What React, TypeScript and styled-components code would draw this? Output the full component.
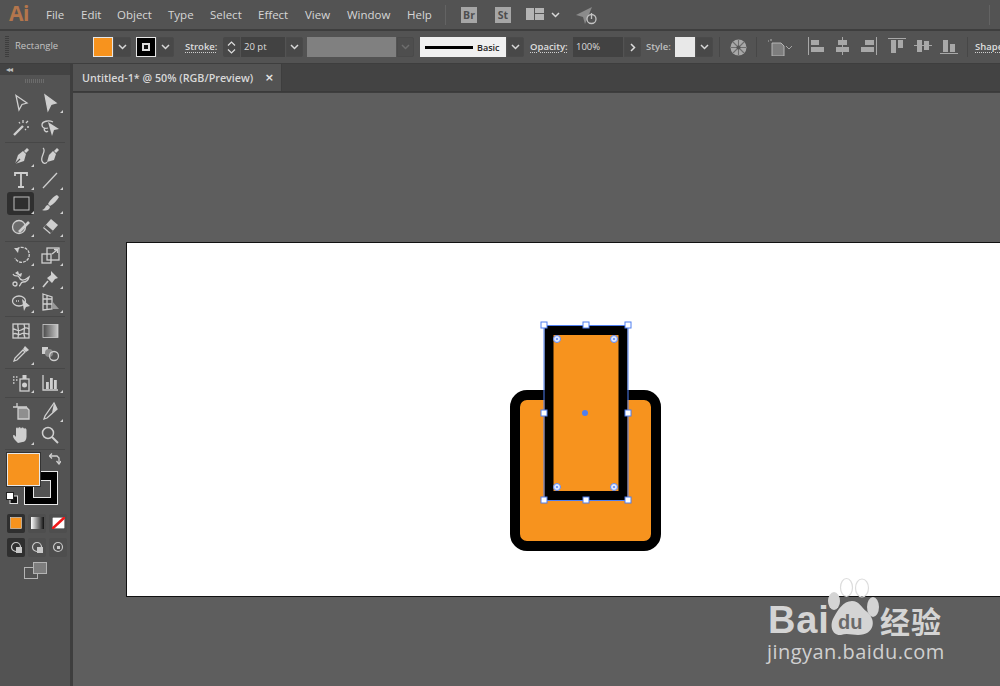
import React from "react";
import styled, { createGlobalStyle } from "styled-components";

const Global = createGlobalStyle`
  html, body { margin: 0; padding: 0; background: #5e5e5e; }
  #root { width: 1000px; height: 686px; overflow: hidden; }
  * { box-sizing: border-box; }
`;

const Shell = styled.div`
  width: 1000px; height: 686px; display: flex; flex-direction: column; overflow: hidden;
  background: #3e3e3e; font-family: "Open Sans", "Noto Sans", sans-serif; color: #d2d2d2;
`;

/* ---------- menu ---------- */
const MenuBar = styled.div`
  height: 29px; flex: none; background: #535353; display: flex; align-items: center; position: relative;
`;
const AiLogo = styled.div`
  width: 46px; padding-left: 9px; font: 700 21px "Open Sans", sans-serif; color: #b4764c; letter-spacing: -0.5px; line-height: 29px; margin-top: -2px;
`;
const MenuItem = styled.div<{ $w: number }>`
  width: ${p => p.$w}px; font-size: 11.5px; color: #d6d6d6; line-height: 29px;
`;
const VSep = styled.div<{ $m?: string; $c?: string }>`
  width: 1px; height: 20px; flex: none; background: ${p => p.$c ?? "#636363"}; margin: ${p => p.$m ?? "0"};
`;
const AppBadge = styled.div<{ $m: string }>`
  width: 16px; height: 16px; flex: none; background: #a6a6a6; color: #4e4e4e; font: 700 10.5px "Open Sans", sans-serif;
  display: flex; align-items: center; justify-content: center; margin: ${p => p.$m};
`;
const Glyph = styled.svg<{ $m?: string }>`
  display: block; flex: none; margin: ${p => p.$m ?? "0"};
`;

/* ---------- control bar ---------- */
const ControlBar = styled.div`
  height: 32px; flex: none; margin-top: 2px; background: #535353; display: flex; align-items: center; position: relative;
`;
const Grip = styled.div`
  width: 4px; height: 22px; margin-left: 5px; flex: none;
  background: repeating-linear-gradient(to bottom, #3d3d3d 0 1px, transparent 1px 2px);
`;
const ToolName = styled.div`
  width: 78px; margin: -3px 0 0 6px; font-size: 9.5px; color: #c4c4c4; flex: none;
`;
const Swatch = styled.div<{ $c: string; $w?: number; $b?: string }>`
  width: ${p => p.$w ?? 20}px; height: 20px; flex: none; background: ${p => p.$c}; border: 1px solid ${p => p.$b ?? "#e6e6e6"};
  display: flex; align-items: center; justify-content: center; position: relative;
`;
const Chev = styled.div<{ $w?: number; $bg?: string }>`
  width: ${p => p.$w ?? 17}px; height: 20px; flex: none; background: ${p => p.$bg ?? "#484848"}; border-radius: 0 2px 2px 0;
  display: flex; align-items: center; justify-content: center; border: 1px solid #4a4a4a; margin-left: 1px;
`;
const Spin = styled.div`
  width: 17px; height: 20px; flex: none; background: #484848; display: flex; flex-direction: column; align-items: center; justify-content: center; gap: 3px; border-radius: 2px 0 0 2px;
`;
const Input = styled.div<{ $w: number }>`
  width: ${p => p.$w}px; height: 20px; flex: none; background: #424242; color: #dcdcdc; font-size: 9.5px; line-height: 19px; padding-left: 3px; margin-left: 1px;
`;
const FieldLabel = styled.div<{ $m: string; $dot?: boolean; $w: number }>`
  width: ${p => p.$w}px; flex: none; margin: ${p => p.$m}; font-size: 9.5px; font-weight: 600; color: ${p => (p.$dot ? "#dedede" : "#c0c0c0")}; line-height: 12px;
  white-space: nowrap;
  ${p => (p.$dot ? "text-decoration: underline dotted #cfcfcf; text-underline-offset: 2px;" : "")}
`;
const Profile = styled.div`
  width: 86px; height: 20px; flex: none; margin-left: 6px; background: #f0f0f0; display: flex; align-items: center; padding-left: 5px; gap: 4px;
  font-size: 9px; font-weight: 600; color: #222;
`;
const StrokeLine = styled.div`
  width: 48px; height: 3px; background: #000; flex: none;
`;
const Gap = styled.div<{ $w: number }>`
  width: ${p => p.$w}px; flex: none;
`;

/* ---------- workspace ---------- */
const Workspace = styled.div`
  flex: 1; min-height: 0; margin-top: 1px; display: flex;
`;
const Panel = styled.div`
  width: 70px; flex: none; display: flex; flex-direction: column; background: #535353;
`;
const PanelHead = styled.div`
  height: 11px; flex: none; background: #434343; font-size: 8px; color: #bdbdbd; padding-left: 6px; line-height: 10px; letter-spacing: -1px;
`;
const PanelGrip = styled.div`
  height: 16px; flex: none; display: flex; justify-content: center; padding-top: 4px;
  &::before { content: ""; width: 20px; height: 4px; background: repeating-linear-gradient(to right, #6c6c6c 0 1px, transparent 1px 2px); }
`;
const Group = styled.div<{ $gap?: number }>`
  padding: 0 6px 2px 7px; display: grid; grid-template-columns: 29px 29px; grid-auto-rows: 23.5px; row-gap: ${p => p.$gap ?? 0}px; position: relative;
`;
const Rule = styled.div`
  height: 1px; margin: 0 5px 2px; background: #474747; flex: none;
`;
const Tool = styled.div<{ $on?: boolean; $corner?: boolean }>`
  width: 27px; height: 23px; position: relative; display: flex; align-items: center; justify-content: center; border-radius: 3px;
  background: ${p => (p.$on ? "#2f2f2f" : "transparent")};
  ${p => p.$corner ? `&::after { content: ""; position: absolute; right: 0; bottom: 1px; border-style: solid; border-width: 0 0 3px 3px; border-color: transparent transparent #d0d0d0 transparent; }` : ""}
`;
const Well = styled.div`
  height: 61px; margin-top: 1px; position: relative; flex: none;
`;
const FillWell = styled.div`
  position: absolute; left: 7px; top: 0; width: 33px; height: 33px; background: #f7931e; border: 1px solid #e8e8e8; outline: 1px solid #333; z-index: 2;
`;
const StrokeWell = styled.div`
  position: absolute; left: 24px; top: 18px; width: 34px; height: 34px; background: #000; border: 1px solid #e8e8e8; z-index: 1;
  &::after { content: ""; position: absolute; left: 8px; top: 8px; width: 16px; height: 16px; background: #535353; border: 1px solid #e8e8e8; }
`;
const SwapIcon = styled.div`
  position: absolute; left: 49px; top: 0;
`;
const DefaultIcon = styled.div`
  position: absolute; left: 6px; top: 39px; z-index: 3;
`;
const ModeRow = styled.div<{ $h: number }>`
  height: ${p => p.$h}px; margin-bottom: 5px; padding-left: 7px; display: flex; gap: 3px; flex: none;
`;
const ModeBtn = styled.div<{ $on?: boolean; $w?: number }>`
  width: ${p => p.$w ?? 18}px; height: 100%; display: flex; align-items: center; justify-content: center; border-radius: 2px;
  background: ${p => (p.$on ? "#2f2f2f" : "#4e4e4e")};
`;
const ScreenRow = styled.div`
  display: flex; justify-content: center; padding-left: 1px;
`;
const Gutter = styled.div`
  width: 3px; flex: none; background: #3e3e3e;
`;
const Main = styled.div`
  flex: 1; min-width: 0; display: flex; flex-direction: column;
`;
const TabBar = styled.div`
  height: 28px; flex: none; background: #434343; display: flex; border-bottom: 1px solid #3a3a3a;
`;
const Tab = styled.div`
  width: 209px; background: #535353; display: flex; align-items: center; justify-content: space-between; padding: 0 7px 0 9px;
  font-size: 10.75px; font-weight: 600; color: #d8d8d8; border-right: 1px solid #3e3e3e;
`;
const Close = styled.span`
  font: 700 11px "DejaVu Sans", sans-serif; color: #e4e4e4;
`;
const Canvas = styled.div`
  flex: 1; margin-top: 1px; background: #5e5e5e; position: relative; overflow: hidden;
`;
const Artboard = styled.div`
  position: absolute; left: 53px; top: 149px; width: 960px; height: 355px; background: #fff; border: 1px solid #111;
`;
const ArtSvg = styled.svg`
  position: absolute; left: 0; top: 0; overflow: visible;
`;
const Mark = styled.div`
  position: absolute; left: 694px; top: 484px; width: 190px; height: 96px; color: #d4d4d4;
`;
const MarkBrand = styled.div`
  position: absolute; left: 1px; top: 23px; font: 700 38px/40px "Liberation Sans", sans-serif; letter-spacing: 0.8px;
`;
const MarkPaw = styled.svg`
  position: absolute; left: 0; top: 0; overflow: visible;
`;
const MarkDu = styled.text`
  font: 700 20px "Liberation Sans", sans-serif; fill: #6a6a6a;
`;
const MarkCn = styled.div`
  position: absolute; left: 113px; top: 22px; font: 700 30px/42px "Noto Sans CJK SC", sans-serif; letter-spacing: 1px; white-space: nowrap;
`;
const MarkUrl = styled.div`
  position: absolute; left: 0; top: 62px; font: 400 20px/26px "Open Sans", sans-serif; letter-spacing: 0.45px; white-space: nowrap; color: #d0d0d0;
`;

/* ---------- icons ---------- */
const ChevD = ({ c = "#d8d8d8" }: { c?: string }) => (
  <Glyph width="9" height="6" viewBox="0 0 9 6"><path d="M1 1l3.5 3.5L8 1" fill="none" stroke={c} strokeWidth="1.5" /></Glyph>
);
const I = ({ children }: { children: React.ReactNode }) => (
  <Glyph width="20" height="20" viewBox="0 0 20 20" fill="none" stroke="#cfcfcf" strokeWidth="1.3">{children}</Glyph>
);
const F = "#cfcfcf";

const icons: Record<string, React.ReactNode> = {
  select: <path d="M5 2.5l11 7.5-5 1.5-3 5.5z" />,
  direct: <path d="M5 2l11 8-5 1.5-3 6z" fill={F} />,
  wand: <><path d="M3 17L12 8" strokeWidth="2.4" /><path d="M12 2v3M15 5l2-2M16 9h2M8 4l1 1.5M14 11l1 1" /></>,
  lasso: <><path d="M13 4C9 2 2 3 2 7c0 3 3 4 6 3" /><path d="M5 10c-2 2 1 5 3 3" /><path d="M8 4l11 7-5 1-2 6z" fill={F} stroke="none" /></>,
  pen: <><path d="M16 2l2 2-3 3-2-2z" fill={F} stroke="none" /><path d="M12 5l3 3-2 7-9 3 3-9z" fill={F} stroke="none" /><path d="M4 18l5-5" stroke="#535353" /></>,
  curv: <><path d="M17 2l2 2-3 3-2-2z" fill={F} stroke="none" /><path d="M13 5l3 3-2 6-7 2 2-7z" fill={F} stroke="none" /><path d="M3 2c4 3-3 8-1 13 1 3 4 3 5 1" /></>,
  type: <path d="M4 6V3h12v3M10 3v14M7 17h6" strokeWidth="1.8" />,
  line: <path d="M3 18L17 3" />,
  rect: <rect x="3" y="4" width="15" height="13" strokeWidth="1" stroke="#bdbdbd" />,
  brush: <><path d="M18 2c-3 1-7 5-9 9l2 2c4-2 7-6 9-9z" fill={F} stroke="none" transform="translate(-1 0)" /><path d="M8 12c-3 0-2 4-6 5 3 1 7 1 8-3z" fill={F} stroke="none" /></>,
  shaper: <><circle cx="8" cy="10" r="6.500" fill="#6c6c6c" /><path d="M8 15L18 5" strokeWidth="2.6" /></>,
  eraser: <><path d="M11 2l7 6-8 9-7-6z" fill={F} stroke="none" /><path d="M3 11l7 6" stroke="#535353" strokeWidth="3" transform="translate(2 -2)" /></>,
  rotate: <><path d="M6 4a7.5 7.5 0 1 1-2 9" strokeDasharray="3 1" /><path d="M3 3l5 0-1 5z" fill={F} stroke="none" /></>,
  scale: <><rect x="2" y="9" width="9" height="9" /><rect x="7" y="3" width="12" height="12" /><path d="M12 9l5-4M14 4.500h3.500V8" /></>,
  warp: <><path d="M2 5c2 4 5 0 6 3s4 5 10 0c-1 4-3 5-6 5s-2 4-4 4" /><circle cx="4" cy="15" r="2" /><path d="M4 4l3-2 1 3 3-1-1 4" fill={F} stroke="none" /></>,
  pin: <><path d="M11 2l7 7-3 1-3 4-5-5 4-3z" fill={F} stroke="none" /><path d="M3 18l5-6" strokeWidth="1.6" /></>,
  shapeb: <><ellipse cx="8" cy="9" rx="6.500" ry="5" /><path d="M11 7l8 7-4 1-2 4z" fill={F} stroke="none" /><path d="M5 9h3" strokeDasharray="1 1" /></>,
  persp: <><path d="M3 2l9 3v12l-9 1zM3 7h9M3 12h9M7 3v14" /><path d="M12 9l7 8h-7z" fill="#9a9a9a" stroke="none" /></>,
  mesh: <><rect x="2" y="3" width="16" height="14" /><path d="M2 8c4 0 4 3 8 1s5-3 8-1M2 13c4-2 5 2 8 0s5 0 8 0M7 3c-1 4 2 6 0 14M13 3c2 5-2 8 1 14" /></>,
  gradient: <rect x="3" y="3.500" width="15" height="13" fill="url(#toolGrad)" stroke="#cfcfcf" strokeWidth="0.8" />,
  eyedrop: <><path d="M14 2l4 4-3 2-3-3z" fill={F} stroke="none" /><path d="M12 6l2 2-8 8-3 1 1-3z" /></>,
  blend: <><rect x="2" y="3" width="6" height="7" fill={F} stroke="none" /><circle cx="9" cy="9" r="4" fill="#8a8a8a" stroke="none" /><circle cx="14" cy="12" r="4.500" /></>,
  spray: <><rect x="9" y="6" width="9" height="12" /><rect x="11.500" y="2" width="4" height="4" fill={F} stroke="none" /><circle cx="13.500" cy="12" r="2.500" fill={F} stroke="none" /><path d="M2 4h1.500M5 4h1.500M2 7h1.500M5 7h1.500M2 10h1.500" /></>,
  chart: <><path d="M3 2v15h15" /><rect x="6" y="9" width="2.800" height="7" fill={F} stroke="none" /><rect x="10" y="5" width="2.800" height="11" fill={F} stroke="none" /><rect x="14" y="7" width="2.800" height="9" fill={F} stroke="none" /></>,
  artb: <><path d="M2 6h14M6 2v4" /><path d="M7 7h9l2 2v9H7z" fill="#8f8f8f" /></>,
  slice: <><path d="M14 2l3 6-10 9-3 1 1-3z" /><path d="M14 2l3 6-5 4z" fill={F} stroke="none" /></>,
  hand: <path d="M7 18c-3-3-5-5-5-7s2-1 3 1V4c0-2 2-2 2 0 0-2.500 3-2.500 3 0 0-2 3-2 3 0 0-1 2.500-1 2.500 1v7c0 3-2 5-4 5z" fill={F} stroke="none" />,
  zoom: <><circle cx="8" cy="8" r="5.500" strokeWidth="1.500" /><path d="M12 12l6 6" strokeWidth="2" /></>,
};

type T = [string, boolean?, boolean?];
const Row = ({ items, gap }: { items: T[]; gap?: number }) => (
  <Group $gap={gap}>
    {items.map(([n, corner, on]) => (
      <Tool key={n} $corner={corner} $on={on}><I>{icons[n]}</I></Tool>
    ))}
  </Group>
);

const AlignIcon = ({ d, m }: { d: React.ReactNode; m: string }) => (
  <Glyph $m={m} width="18" height="20" viewBox="0 0 18 20" fill="#a8a8a8">{d}</Glyph>
);
const Handle = ({ x, y }: { x: number; y: number }) => (
  <rect x={x - 3} y={y - 3} width="6" height="6" fill="#fff" stroke="#4f7ff0" strokeWidth="1" />
);
const Widget = ({ x, y }: { x: number; y: number }) => (
  <g><circle cx={x} cy={y} r="3.500" fill="#dfe7ff" stroke="#5f8af5" strokeWidth="1" /><circle cx={x} cy={y} r="1.100" fill="#5f8af5" /></g>
);

const menus: [string, number][] = [["File", 35], ["Edit", 36], ["Object", 51], ["Type", 42], ["Select", 48], ["Effect", 47], ["View", 42], ["Window", 60], ["Help", 38]];

export default function App() {
  const ox = 127, oy = 243;
  return (
    <Shell>
      <Global />
      <MenuBar>
        <AiLogo>Ai</AiLogo>
        {menus.map(([m, w]) => <MenuItem key={m} $w={w}>{m}</MenuItem>)}
        <VSep />
        <AppBadge $m="0 0 0 15px">Br</AppBadge>
        <AppBadge $m="0 0 0 18px">St</AppBadge>
        <Glyph $m="0 0 0 15px" width="18" height="13" viewBox="0 0 18 13" fill="#b4b4b4"><rect width="8" height="12" /><rect x="9" width="9" height="5" /><rect x="9" y="6" width="9" height="6" /></Glyph>
        <Gap $w={7} /><ChevD />
        <Glyph $m="2px 0 0 16px" width="23" height="20" viewBox="0 0 23 20" fill="none">
          <path d="M0 9L16 1 9 18 7 11z" fill="#8b8b8b" />
          <circle cx="15.500" cy="13" r="4.500" stroke="#c4c4c4" strokeWidth="1.300" fill="#535353" />
          <path d="M15.500 7v6" stroke="#c4c4c4" strokeWidth="1.300" />
        </Glyph>
        <Gap $w={390} /><VSep />
      </MenuBar>

      <ControlBar>
        <Grip />
        <ToolName>Rectangle</ToolName>
        <Swatch $c="#f7931e" />
        <Chev><ChevD /></Chev>
        <Gap $w={5} />
        <Swatch $c="#000">
          <Glyph width="8" height="8" viewBox="0 0 8 8"><rect width="8" height="8" fill="#ddd" /><rect x="2" y="2" width="4" height="4" fill="#111" /></Glyph>
        </Swatch>
        <Chev><ChevD /></Chev>
        <FieldLabel $w={32} $m="0 0 0 11px" $dot>Stroke:</FieldLabel>
        <Gap $w={6} />
        <Spin>
          <Glyph width="9" height="5" viewBox="0 0 9 5"><path d="M1 4.500L4.500 1 8 4.500" fill="none" stroke="#ddd" strokeWidth="1.200" /></Glyph>
          <Glyph width="9" height="5" viewBox="0 0 9 5"><path d="M1 .5L4.500 4 8 .5" fill="none" stroke="#ddd" strokeWidth="1.200" /></Glyph>
        </Spin>
        <Input $w={44}>20 pt</Input>
        <Chev><ChevD /></Chev>
        <Gap $w={4} />
        <Swatch $c="#808080" $w={89} $b="#808080" />
        <Chev $bg="#4e4e4e"><ChevD c="#6d6d6d" /></Chev>
        <Profile><StrokeLine />Basic</Profile>
        <Chev><ChevD /></Chev>
        <FieldLabel $w={37} $m="0 0 0 6px" $dot>Opacity:</FieldLabel>
        <Gap $w={5} />
        <Input $w={50}>100%</Input>
        <Chev>
          <Glyph width="6" height="9" viewBox="0 0 6 9"><path d="M1 1l3.500 3.500L1 8" fill="none" stroke="#ddd" strokeWidth="1.500" /></Glyph>
        </Chev>
        <FieldLabel $w={26} $m="0 0 0 5px">Style:</FieldLabel>
        <Gap $w={3} />
        <Swatch $c="#e8e8e8" $b="#e8e8e8" />
        <Chev><ChevD /></Chev>
        <VSep $m="0 0 0 6px" $c="#474747" />
        <Glyph $m="0 0 0 10px" width="17" height="17" viewBox="0 0 17 17">
          <circle cx="8.500" cy="8.500" r="8" fill="#a8a8a8" />
          <g stroke="#6d6d6d" strokeWidth="1.100"><path d="M8.500 1v15M1 8.500h15M3 3l11 11M14 3L3 14" /></g>
          <circle cx="8.500" cy="8.500" r="2" fill="#555" />
        </Glyph>
        <VSep $m="0 0 0 9px" $c="#474747" />
        <Glyph $m="0 0 0 11px" width="25" height="17" viewBox="0 0 25 17" fill="none">
          <path d="M4 4h9l3 3v10H4z" fill="#7e7e7e" stroke="#b5b5b5" />
          <path d="M0 2h1M3 0v2" stroke="#b5b5b5" />
          <path d="M18 7l3 3 3-3" stroke="#a5a5a5" />
        </Glyph>
        <AlignIcon m="0 0 0 15px" d={<><rect width="1" height="18" /><rect x="3" y="3" width="8" height="5" /><rect x="3" y="10" width="13" height="5" /></>} />
        <AlignIcon m="0 0 0 8px" d={<><rect x="8" width="1" height="18" /><rect x="4" y="3" width="9" height="5" /><rect x="2" y="10" width="13" height="5" /></>} />
        <AlignIcon m="0 0 0 8px" d={<><rect x="16" width="1" height="18" /><rect x="5" y="3" width="9" height="5" /><rect x="1" y="10" width="13" height="5" /></>} />
        <AlignIcon m="0 0 0 10px" d={<><rect width="18" height="1" y="1" /><rect x="3" y="3" width="5" height="13" /><rect x="10" y="3" width="5" height="8" /></>} />
        <AlignIcon m="0 0 0 8px" d={<><rect width="18" height="1" y="8" /><rect x="3" y="3" width="5" height="12" /><rect x="10" y="4" width="5" height="9" /></>} />
        <AlignIcon m="0 0 0 8px" d={<><rect width="18" height="1" y="16" /><rect x="3" y="3" width="5" height="12" /><rect x="10" y="7" width="5" height="8" /></>} />
        <VSep $m="0 0 0 9px" $c="#474747" />
        <FieldLabel $w={40} $m="0 0 0 7px" $dot>Shape:</FieldLabel>
      </ControlBar>

      <Workspace>
        <Panel>
          <PanelHead>◂◂</PanelHead>
          <PanelGrip />
          <svg width="0" height="0" style={{ position: "absolute" }}>
            <defs><linearGradient id="toolGrad"><stop offset="0" stopColor="#4a4a4a" /><stop offset="1" stopColor="#c8c8c8" /></linearGradient></defs>
          </svg>
          <Row gap={1.5} items={[["select"], ["direct", true], ["wand"], ["lasso"]]} />
          <Rule />
          <Row items={[["pen", true], ["curv"], ["type", true], ["line", true], ["rect", true, true], ["brush", true], ["shaper", true], ["eraser", true]]} />
          <Rule />
          <Row items={[["rotate", true], ["scale", true], ["warp", true], ["pin", true], ["shapeb", true], ["persp", true]]} />
          <Rule />
          <Row items={[["mesh"], ["gradient"], ["eyedrop", true], ["blend"]]} />
          <Rule />
          <Row items={[["spray", true], ["chart", true]]} />
          <Rule />
          <Row items={[["artb"], ["slice", true], ["hand", true], ["zoom"]]} />
          <Rule />
          <Well>
            <FillWell />
            <StrokeWell />
            <SwapIcon>
              <Glyph width="12" height="12" viewBox="0 0 12 12" fill="none" stroke="#cfcfcf" strokeWidth="1.300">
                <path d="M1 3h7l2 2v5" /><path d="M3 .5L.5 3 3 5.500M7.500 8l2.500 3 2-3" />
              </Glyph>
            </SwapIcon>
            <DefaultIcon>
              <Glyph width="12" height="12" viewBox="0 0 12 12">
                <rect x="4" y="4" width="7.500" height="7.500" fill="#111" stroke="#ddd" />
                <rect x=".5" y=".5" width="7" height="7" fill="#fff" stroke="#222" />
              </Glyph>
            </DefaultIcon>
          </Well>
          <ModeRow $h={19}>
            <ModeBtn $on>
              <Glyph width="12" height="12" viewBox="0 0 12 12"><rect x=".5" y=".5" width="11" height="11" fill="#f7931e" stroke="#ddd" strokeWidth=".6" /></Glyph>
            </ModeBtn>
            <ModeBtn>
              <Glyph width="13" height="12" viewBox="0 0 13 12">
                <defs><linearGradient id="mg"><stop offset="0" stopColor="#fff" /><stop offset="1" stopColor="#111" /></linearGradient></defs>
                <rect width="13" height="12" fill="url(#mg)" />
              </Glyph>
            </ModeBtn>
            <ModeBtn>
              <Glyph width="13" height="12" viewBox="0 0 13 12">
                <rect width="13" height="12" fill="#fff" stroke="#222" /><path d="M0 12L13 0" stroke="#f01818" strokeWidth="2.600" />
              </Glyph>
            </ModeBtn>
          </ModeRow>
          <ModeRow $h={19}>
            {[true, false, false].map((on, i) => (
              <ModeBtn key={i} $on={on}>
                <Glyph width="13" height="13" viewBox="0 0 13 13" fill="none" stroke="#c8c8c8" strokeWidth="1.200">
                  <circle cx="6" cy="6" r="4.500" />
                  <rect x={i === 2 ? 5 : 6} y={i === 2 ? 5 : 6} width={i === 2 ? 3 : 6} height={i === 2 ? 3 : 6} fill="#c8c8c8" stroke="none" />
                </Glyph>
              </ModeBtn>
            ))}
          </ModeRow>
          <ScreenRow>
            <Glyph width="23" height="17" viewBox="0 0 23 17" fill="none" stroke="#b4b4b4">
              <rect x=".5" y="5.500" width="13" height="11" />
              <rect x="9.500" y=".5" width="13" height="11" fill="#7e7e7e" />
            </Glyph>
          </ScreenRow>
        </Panel>
        <Gutter />
        <Main>
          <TabBar>
            <Tab>Untitled-1* @ 50% (RGB/Preview)<Close>×</Close></Tab>
          </TabBar>
          <Canvas>
            <Artboard>
              <ArtSvg width="960" height="355" viewBox={`${ox} ${oy} 960 355`}>
                <rect x="515" y="395" width="141" height="151" rx="12" fill="#f7931e" stroke="#000" strokeWidth="10" />
                <rect x="549" y="330.500" width="74" height="165" fill="#f7931e" stroke="#000" strokeWidth="9" />
                <rect x="544" y="325.500" width="84" height="175" fill="none" stroke="#4f7ff0" strokeWidth="1" />
                <Widget x={557} y={339} /><Widget x={614} y={339} /><Widget x={557} y={487} /><Widget x={614} y={487} />
                <Handle x={544} y={325} /><Handle x={586} y={325} /><Handle x={628} y={325} />
                <Handle x={544} y={413} /><Handle x={628} y={413} />
                <Handle x={544} y={500} /><Handle x={586} y={500} /><Handle x={628} y={500} />
                <circle cx="585" cy="413" r="3" fill="#4f7ff0" />
              </ArtSvg>
            </Artboard>
            <Mark>
              <MarkPaw width="190" height="96" viewBox="0 0 190 96">
                <ellipse cx="79.500" cy="10.500" rx="6" ry="9" fill="none" stroke="#dcdcdc" strokeWidth="1.200" />
                <ellipse cx="95" cy="11" rx="6.500" ry="9" fill="none" stroke="#dcdcdc" strokeWidth="1.200" />
                <ellipse cx="67" cy="24" rx="6" ry="9" fill="#d4d4d4" />
                <ellipse cx="106" cy="30" rx="6" ry="10" fill="#d4d4d4" />
                <path d="M85 24c7 0 9 6 14 10 11 8 9 24-8 24-6 0-11-2-17 0-9 1-12-10-7-18 4-7 9-16 18-16z" fill="#d4d4d4" />
                <MarkDu x="71" y="52">du</MarkDu>
              </MarkPaw>
              <MarkBrand>Bai</MarkBrand>
              <MarkCn>经验</MarkCn>
              <MarkUrl>jingyan.baidu.com</MarkUrl>
            </Mark>
          </Canvas>
        </Main>
      </Workspace>
    </Shell>
  );
}
